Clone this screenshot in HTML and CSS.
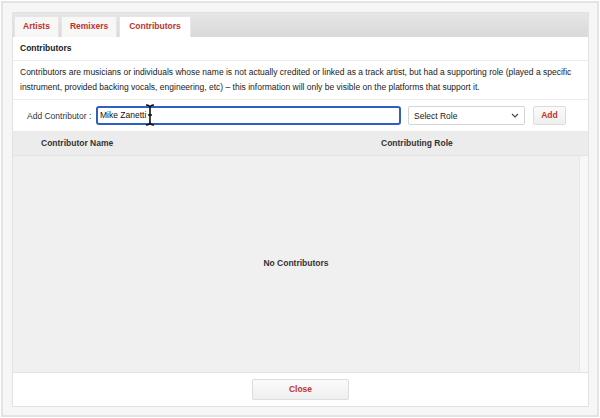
FILE: index.html
```html
<!DOCTYPE html>
<html>
<head>
<meta charset="utf-8">
<link rel="stylesheet" href="styles.css">
</head>
<body>
<div class="frame">
  <div class="panel">
    <div class="tabs">
      <div class="tab">Artists</div>
      <div class="tab">Remixers</div>
      <div class="tab active">Contributors</div>
    </div>
    <div class="heading">Contributors</div>
    <div class="desc">Contributors are musicians or individuals whose name is not actually credited or linked as a track artist, but had a supporting role (played a specific instrument, provided backing vocals, engineering, etc) – this information will only be visible on the platforms that support it.</div>
    <div class="addrow">
      <label class="addlabel">Add Contributor :</label>
      <div class="inputwrap">
        <div class="input">Mike Zanetti</div>
        <svg class="ibeam" width="10" height="22" viewBox="0 0 10 22"><path d="M1 1 Q5 1 5 4 L5 18 Q5 21 1 21 M9 1 Q5 1 5 4 M5 18 Q5 21 9 21 M3 11 L7 11" fill="none" stroke="#111" stroke-width="1.6"/></svg>
      </div>
      <div class="select">Select Role<svg width="8" height="5" viewBox="0 0 8 5"><path d="M1 1 L4 4 L7 1" fill="none" stroke="#444" stroke-width="1.1"/></svg></div>
      <div class="btn add">Add</div>
    </div>
    <div class="thead">
      <div class="th name">Contributor Name</div>
      <div class="th role">Contributing Role</div>
    </div>
    <div class="tbody">
      <div class="empty">No Contributors</div>
      <div class="scroll"></div>
    </div>
    <div class="footer">
      <div class="btn close">Close</div>
    </div>
  </div>
</div>
</body>
</html>
```
FILE: styles.css
```css
* { box-sizing: border-box; }
html, body { margin: 0; padding: 0; }
body {
  width: 600px; height: 418px;
  background: #ffffff;
  font-family: "Liberation Sans", Arial, sans-serif;
  font-size: 8.5px;
  color: #1a1a1a;
}
.frame {
  margin: 1px;
  width: 598px; height: 416px;
  border: 2px solid #e4e4e4;
  background: #f6f6f6;
  padding: 9px 9px 9px 9px;
}
.panel {
  width: 577px;
  height: 395px;
  background: #fff;
  border: 1px solid #e2e2e2;
  display: flex;
  flex-direction: column;
}
.tabs {
  height: 24px;
  background: linear-gradient(#e6e6e6, #d9d9d9);
  display: flex;
  align-items: flex-end;
  padding-left: 1px;
  gap: 2px;
}
.tab {
  height: 21px;
  padding: 0 8px;
  background: #f7f7f7;
  color: #c1322b;
  font-weight: bold;
  line-height: 19px;
  border: 1px solid #e6e6e6;
  border-bottom: none;
}
.tab.active { background: #fff; height: 21px; line-height: 19px; padding: 0 9px; }
.heading {
  height: 24px;
  line-height: 23px;
  padding-left: 7px;
  font-weight: bold;
  color: #1a1a1a;
  border-bottom: 1px solid #ececec;
}
.desc {
  height: 39px;
  padding: 4px 7px 0 7px;
  line-height: 15px;
  color: #1a1a1a;
  border-bottom: 1px solid #ececec;
}
.addrow {
  height: 31px;
  display: flex;
  align-items: center;
  padding-left: 14px;
}
.addlabel { color: #333; width: 69px; white-space: nowrap; }
.inputwrap { position: relative; }
.input {
  width: 305px;
  height: 19px;
  border: 2px solid #2f5fc4;
  border-radius: 3px;
  padding-left: 2px;
  line-height: 15px;
  color: #111;
}
.ibeam { position: absolute; left: 49px; top: -2px; }
.select {
  margin-left: 7px;
  width: 117px;
  height: 19px;
  border: 1px solid #d4d4d4;
  border-radius: 2px;
  padding: 0 5px;
  display: flex;
  align-items: center;
  justify-content: space-between;
  color: #1a1a1a;
  background: #fff;
}
.btn {
  border: 1px solid #dcdcdc;
  border-radius: 2px;
  background: linear-gradient(#fbfbfb, #efefef);
  color: #c1322b;
  font-weight: bold;
  text-align: center;
}
.add { margin-left: 8px; width: 33px; height: 19px; line-height: 17px; }
.thead {
  height: 25px;
  background: #ececec;
  display: flex;
  align-items: center;
  border-bottom: 1px solid #e4e4e4;
  font-weight: bold;
  color: #333;
}
.th.name { padding-left: 28px; width: 368px; }
.tbody {
  flex: 1;
  background: #f0f0f0;
  display: flex;
}
.empty {
  flex: 1;
  display: flex;
  align-items: center;
  justify-content: center;
  font-weight: bold;
  color: #333;
  padding-bottom: 2px;
}
.scroll { width: 9px; background: #f7f7f7; border-left: 1px solid #e8e8e8; }
.footer {
  height: 34px;
  display: flex;
  align-items: center;
  justify-content: center;
  border-top: 1px solid #e4e4e4;
}
.close { width: 97px; height: 21px; line-height: 19px; }
```
